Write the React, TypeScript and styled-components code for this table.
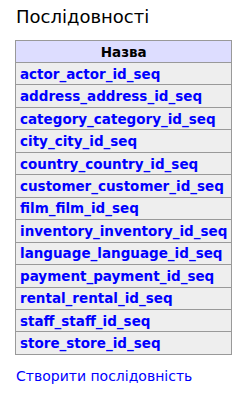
import React from "react";
import styled, { createGlobalStyle } from "styled-components";

const GlobalStyle = createGlobalStyle`
  html, body {
    margin: 0;
    padding: 0;
    background: #fff;
  }
  body {
    font-family: "DejaVu Sans", Verdana, sans-serif;
  }
`

const Page = styled.div`
  padding: 6px 15px 0 15px;
`
const Title = styled.h2`
  margin: 0 0 13px 1px;
  font-size: 18px;
  line-height: 21px;
  font-weight: normal;
  color: #000;
`
const Table = styled.table`
  border-collapse: collapse;
  width: 216px;
`
const HeadCell = styled.th`
  background-color: #ddf;
  border: 1px solid #999;
  padding: 0 4px;
  height: 21px;
  font-size: 13.5px;
  text-align: center;
  color: #000;
`
const Cell = styled.td`
  background-color: #eee;
  border: 1px solid #999;
  padding: 0 4px;
  height: 21.46px;
  font-size: 13.5px;
  white-space: nowrap;
`
const SeqLink = styled.a`
  color: #0000ff;
  font-weight: bold;
  text-decoration: none;
`
const Actions = styled.p`
  margin: 13px 0 0 1px;
  font-size: 14px;
`
const ActionLink = styled.a`
  color: #0000ff;
  text-decoration: none;
`

const sequences = [
  "actor_actor_id_seq",
  "address_address_id_seq",
  "category_category_id_seq",
  "city_city_id_seq",
  "country_country_id_seq",
  "customer_customer_id_seq",
  "film_film_id_seq",
  "inventory_inventory_id_seq",
  "language_language_id_seq",
  "payment_payment_id_seq",
  "rental_rental_id_seq",
  "staff_staff_id_seq",
  "store_store_id_seq",
]

export default function App(): React.JSX.Element {
  return (
    <Page>
      <GlobalStyle />
      <Title>Послідовності</Title>
      <Table>
        <thead>
          <tr>
            <HeadCell>Назва</HeadCell>
          </tr>
        </thead>
        <tbody>
          {sequences.map((name) => (
            <tr key={name}>
              <Cell>
                <SeqLink href="#">{name}</SeqLink>
              </Cell>
            </tr>
          ))}
        </tbody>
      </Table>
      <Actions>
        <ActionLink href="#">Створити послідовність</ActionLink>
      </Actions>
    </Page>
  )
}
